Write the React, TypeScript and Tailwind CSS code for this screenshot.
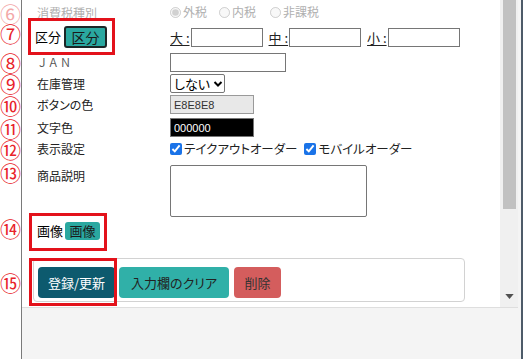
import React from 'react';

const marks = [
  { n: '⑥', cls: 'mt-[3px] text-[#f3a9a9]' },
  { n: '⑦', cls: 'mt-0' },
  { n: '⑧', cls: 'mt-[9px]' },
  { n: '⑨', cls: 'mt-[1px]' },
  { n: '⑩', cls: 'mt-[2px]' },
  { n: '⑪', cls: 'mt-[3px]' },
  { n: '⑫', cls: 'mt-[1px]' },
  { n: '⑬', cls: 'mt-[3px]' },
  { n: '⑭', cls: 'mt-[36px]' },
  { n: '⑮', cls: 'mt-[34px]' },
];

function SizeInput({ label }: { label: string }) {
  return (
    <div className="flex items-end h-full">
      <span className="underline underline-offset-2 text-[13px] leading-[19px] mr-[1px]">{label}</span>
      <input readOnly className="w-[72px] h-[19px] border border-[#767676] bg-white" />
    </div>
  );
}

export default function App() {
  return (
    <div className="w-[523px] h-[359px] flex bg-[#f4f4f4] overflow-hidden text-[#222] font-['Noto_Sans_CJK_JP',sans-serif] [font-feature-settings:'palt']">
      {/* annotation numbers */}
      <div className="w-[22px] shrink-0 bg-white border-r border-[#7a7a7a] flex flex-col items-center text-[#e8232a] text-[21px] leading-[16px]">
        {marks.map((m) => (
          <div key={m.n} className={`h-[20px] flex items-center ${m.cls}`}>{m.n}</div>
        ))}
      </div>

      <div className="w-[496px] shrink-0 flex flex-col">
        <div className="h-[308px] flex border-b border-[#dedede]">
          {/* form */}
          <div className="flex-1 bg-white flex flex-col text-[12px]">
            {/* row 6 */}
            <div className="h-[24px] flex items-center text-[#b0b0b0]">
              <div className="w-[148px] pl-[15px] pt-[1px]">消費税種別</div>
              <label className="flex items-center mr-[12px]">
                <input type="radio" disabled defaultChecked className="w-[11px] h-[11px] mr-[2px] accent-[#9cc3ee]" />外税
              </label>
              <label className="flex items-center mr-[14px]">
                <input type="radio" disabled className="w-[11px] h-[11px] mr-[2px]" />内税
              </label>
              <label className="flex items-center">
                <input type="radio" disabled className="w-[11px] h-[11px] mr-[2px]" />非課税
              </label>
            </div>

            {/* row 7 */}
            <div className="mt-[3px] h-[20px] flex">
              <div className="relative w-[148px] pl-[13px] flex items-center">
                <span className="text-[13px] text-black">区分</span>
                <button className="ml-[3px] w-[43px] h-[22px] bg-[#2aa8a0] border-2 border-[#1c2626] rounded-[3px] text-[14px] leading-[18px] text-[#1a1a1a]">
                  区分
                </button>
                <div className="absolute left-[6px] top-[-9px] w-[87px] h-[37px] border-[3px] border-[#e3121b]" />
              </div>
              <div className="flex gap-[6px]">
                <SizeInput label="大 :" />
                <SizeInput label="中 :" />
                <SizeInput label="小 :" />
              </div>
            </div>

            {/* row 8 */}
            <div className="mt-[6px] h-[19px] flex items-center">
              <div className="w-[148px] pl-[17px] text-[#555] tracking-[3px] text-[11px]">ＪＡＮ</div>
              <input readOnly className="w-[116px] h-[19px] border border-[#767676]" />
            </div>

            {/* row 9 */}
            <div className="mt-[2px] h-[19px] flex items-center">
              <div className="w-[148px] pl-[15px]">在庫管理</div>
              <div className="w-[55px] h-[19px] border border-[#767676] rounded-[2px] flex items-center pl-[3px] text-[13px] text-black">
                しない
                <svg viewBox="0 0 10 10" className="w-[10px] h-[10px] ml-[3px]">
                  <path d="M1.5 3 L5 6.5 L8.5 3" fill="none" stroke="#000" strokeWidth="2" />
                </svg>
              </div>
            </div>

            {/* row 10 */}
            <div className="mt-[2px] h-[19px] flex items-center">
              <div className="w-[148px] pl-[15px]">ボタンの色</div>
              <input readOnly defaultValue="E8E8E8" className="w-[84px] h-[19px] border border-[#9a9a9a] bg-[#e8e8e8] pl-[3px] text-[11px] text-[#333] font-['Liberation_Sans',sans-serif]" />
            </div>

            {/* row 11 */}
            <div className="mt-[4px] h-[19px] flex items-center">
              <div className="w-[148px] pl-[15px]">文字色</div>
              <input readOnly defaultValue="000000" className="w-[84px] h-[19px] border border-[#767676] bg-black pl-[3px] text-[11px] text-white font-['Liberation_Sans',sans-serif]" />
            </div>

            {/* row 12 */}
            <div className="mt-[2px] h-[20px] flex items-center">
              <div className="w-[148px] pl-[15px]">表示設定</div>
              <label className="flex items-center text-[12.5px] mr-[7px]">
                <input type="checkbox" defaultChecked className="w-[12px] h-[12px] mr-[2px] accent-[#1a73e8]" />
                テイクアウトオーダー
              </label>
              <label className="flex items-center text-[12.5px]">
                <input type="checkbox" defaultChecked className="w-[12px] h-[12px] mr-[2px] accent-[#1a73e8]" />
                モバイルオーダー
              </label>
            </div>

            {/* row 13 */}
            <div className="mt-[6px] h-[52px] flex items-start">
              <div className="w-[148px] pl-[15px] pt-[2px]">商品説明</div>
              <textarea readOnly className="w-[197px] h-[52px] border border-[#767676] rounded-[2px] resize-none" />
            </div>

            {/* row 14 */}
            <div className="mt-[4px] h-[20px] flex items-center">
              <div className="relative w-[148px] pl-[15px] flex items-center">
                <span className="text-[13px] text-black">画像</span>
                <button className="ml-[2px] w-[35px] h-[18px] bg-[#2aa8a0] rounded-[3px] text-[13px] leading-[18px] text-[#1a1a1a]">
                  画像
                </button>
                <div className="absolute left-[7px] top-[-8px] w-[78px] h-[38px] border-[3px] border-[#e3121b]" />
              </div>
            </div>

            {/* row 15 */}
            <div className="mt-[17px] ml-[11px] relative w-[432px] h-[44px] border border-[#d2d2d2] rounded-[4px] pl-[4px] pt-[8px] flex gap-[4px] text-[13px]">
              <button className="w-[77px] h-[31px] rounded-[4px] bg-[#0d5a6e] text-white">登録/更新</button>
              <button className="w-[110px] h-[31px] rounded-[4px] bg-[#30b0a8] text-[#222]">入力欄のクリア</button>
              <button className="ml-[1px] w-[47px] h-[31px] rounded-[4px] bg-[#d45d5d] text-[#333]">削除</button>
              <div className="absolute left-[-5px] top-[-1px] w-[88px] h-[48px] border-[3px] border-[#e3121b]" />
            </div>
          </div>

          {/* scrollbar */}
          <div className="w-[18px] bg-[#f0f0f0] flex flex-col items-center">
            <div className="w-[13px] h-[209px] bg-[#c1c1c1]" />
            <div className="flex-1" />
            <svg viewBox="0 0 10 6" className="w-[9px] h-[5px] mb-[8px]">
              <path d="M0 0 L10 0 L5 6 Z" fill="#505050" />
            </svg>
          </div>
        </div>
        <div className="flex-1" />
      </div>

      <div className="w-[3px] shrink-0 bg-[#f4f4f4]" />
      <div className="w-[2px] shrink-0 bg-[#4d5b69]" />
    </div>
  );
}
